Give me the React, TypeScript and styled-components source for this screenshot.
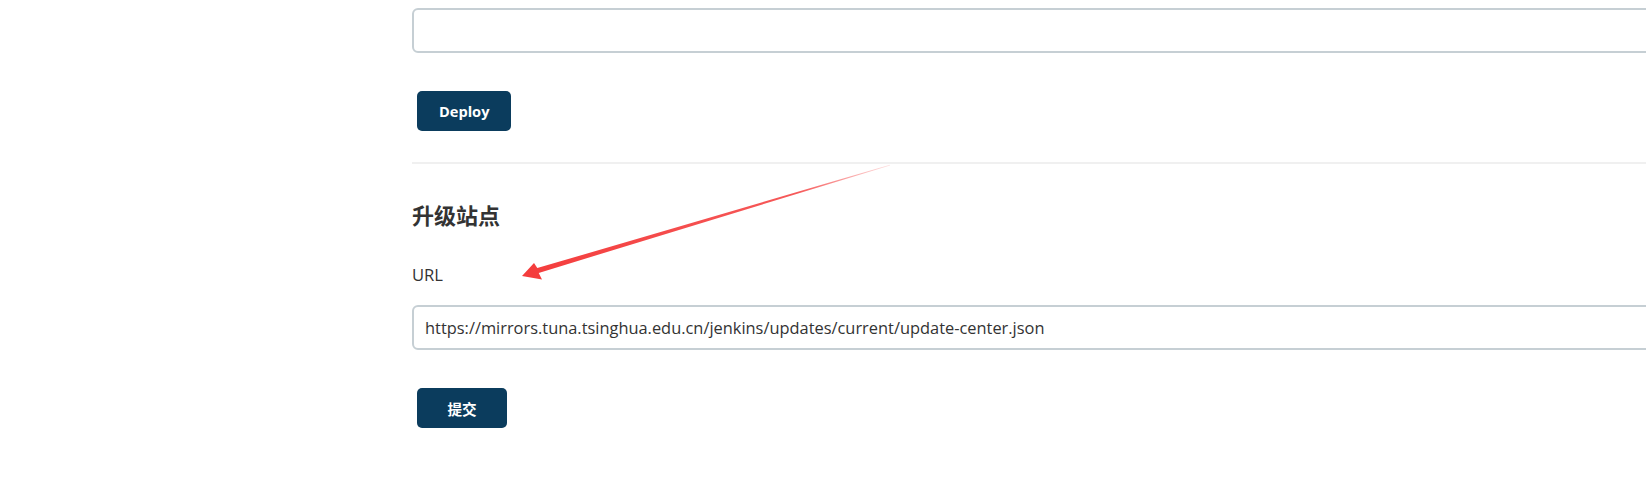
import React from "react";
import styled, { createGlobalStyle } from "styled-components";

const GlobalStyle = createGlobalStyle`
  html, body {
    margin: 0;
    padding: 0;
    background: #ffffff;
    overflow: hidden;
  }
  body {
    font-family: "Open Sans", "Noto Sans", "Noto Sans CJK SC", sans-serif;
    color: #333333;
  }
`;

const Page = styled.div`
  position: relative;
  width: 1646px;
  height: 487px;
  overflow: hidden;
`;

const Main = styled.main`
  display: flex;
  flex-direction: column;
  width: 1300px;
  padding: 8px 0 0 412px;
`;

const TextInput = styled.input`
  box-sizing: border-box;
  width: 100%;
  height: 45px;
  border: 2px solid #c6cfd4;
  border-radius: 6px;
  padding: 0 11px;
  font-family: "Open Sans", "Noto Sans", sans-serif;
  font-size: 16.4px;
  color: #333333;
  background: #ffffff;
  outline: none;
`;

const ButtonRow = styled.div`
  display: flex;
  margin-top: 38px;
  padding-left: 5px;
`;

const PrimaryButton = styled.button`
  box-sizing: border-box;
  min-width: 90px;
  height: 40px;
  padding: 0 22px;
  border: none;
  border-radius: 5px;
  background: #0b3c5d;
  color: #ffffff;
  font-family: "Open Sans", "Noto Sans CJK SC", sans-serif;
  font-weight: 700;
  font-size: 14.6px;
  display: flex;
  align-items: center;
  justify-content: center;
  cursor: pointer;
`;

const Divider = styled.hr`
  margin: 31px 0 0 0;
  border: none;
  height: 2px;
  background: #f0f0f0;
`;

const SectionTitle = styled.h2`
  margin: 34px 0 0 0;
  font-family: "Noto Sans CJK SC", sans-serif;
  font-size: 22px;
  line-height: 32px;
  font-weight: 700;
  color: #333333;
`;

const FieldLabel = styled.label`
  margin-top: 33px;
  font-size: 16.6px;
  line-height: 24px;
  color: #333333;
`;

const FieldInput = styled(TextInput)`
  margin-top: 18px;
`;

const ArrowOverlay = styled.svg`
  position: absolute;
  left: 0;
  top: 0;
  pointer-events: none;
`;

function Arrow() {
  return (
    <ArrowOverlay width="1646" height="487" viewBox="0 0 1646 487">
      <defs>
        <linearGradient id="arrowFade" x1="890" y1="165" x2="522" y2="276" gradientUnits="userSpaceOnUse">
          <stop offset="0" stopColor="#f43c3c" stopOpacity="0.15" />
          <stop offset="0.25" stopColor="#f43c3c" stopOpacity="0.85" />
          <stop offset="1" stopColor="#f43c3c" stopOpacity="1" />
        </linearGradient>
      </defs>
      <polygon
        fill="url(#arrowFade)"
        points="890,164.8 537.3,268.1 534,263 522,276 542,279.5 538.7,272.9 890,165.4"
      />
    </ArrowOverlay>
  );
}

export default function App() {
  return (
    <Page>
      <GlobalStyle />
      <Main>
        <TextInput type="text" aria-label="file" />
        <ButtonRow>
          <PrimaryButton>Deploy</PrimaryButton>
        </ButtonRow>
        <Divider />
        <SectionTitle>升级站点</SectionTitle>
        <FieldLabel htmlFor="site-url">URL</FieldLabel>
        <FieldInput
          id="site-url"
          type="text"
          defaultValue="https://mirrors.tuna.tsinghua.edu.cn/jenkins/updates/current/update-center.json"
        />
        <ButtonRow>
          <PrimaryButton>提交</PrimaryButton>
        </ButtonRow>
      </Main>
      <Arrow />
    </Page>
  );
}
